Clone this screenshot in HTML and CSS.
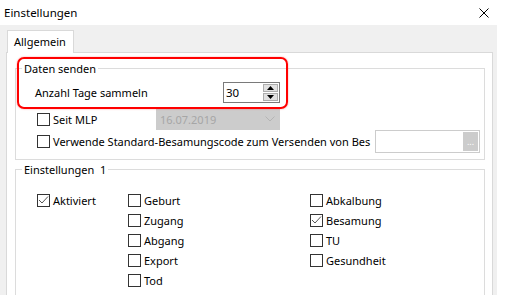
FILE: index.html
```html
<!DOCTYPE html>
<html lang="de">
<head>
  <meta charset="UTF-8">
  <title>Einstellungen</title>
  <link rel="stylesheet" href="styles.css">
</head>
<body>

  <div class="window">
    <!-- Titelleiste -->
    <div class="titlebar">
      <span class="title">Einstellungen</span>
      <svg class="close" width="10" height="10" viewBox="0 0 10 10"><path d="M0.5 0.5 L9.5 9.5 M9.5 0.5 L0.5 9.5" stroke="#000" stroke-width="1"/></svg>
    </div>

    <div class="client">
      <div class="tabs"><div class="tab">Allgemein</div></div>

      <div class="panel">
        <!-- Daten senden -->
        <fieldset class="group g1">
          <legend>Daten senden</legend>
          <div class="row r1">
            <span class="lbl">Anzahl Tage sammeln</span>
            <div class="spin">
              <span class="val">30</span>
              <div class="spin-btns">
                <span class="sbtn"><svg width="7" height="4" viewBox="0 0 7 4"><path d="M3.5 0 L7 4 L0 4Z" fill="#000"/></svg></span>
                <span class="sbtn"><svg width="7" height="4" viewBox="0 0 7 4"><path d="M0 0 L7 0 L3.5 4Z" fill="#000"/></svg></span>
              </div>
            </div>
          </div>
          <div class="row r2">
            <label class="cb w-mlp"><span class="box"></span>Seit MLP</label>
            <div class="date">
              <span>16.07.2019</span>
              <svg width="10" height="6" viewBox="0 0 10 6"><path d="M0.5 0.5 L5 5 L9.5 0.5" stroke="#b4b4b4" fill="none"/></svg>
            </div>
          </div>
          <div class="row r3">
            <label class="cb w-code"><span class="box"></span>Verwende Standard-Besamungscode zum Versenden von Bes</label>
            <div class="txt"><span class="dots">...</span></div>
          </div>
        </fieldset>

        <!-- Einstellungen 1 -->
        <fieldset class="group g2">
          <legend>Einstellungen&nbsp; 1</legend>
          <div class="cols">
            <div class="col c1">
              <label class="cb"><span class="box"><svg width="11" height="11" viewBox="0 0 11 11"><polyline points="1,5 4,8 10,1.5" stroke="#555" fill="none"/></svg></span>Aktiviert</label>
            </div>
            <div class="col c2">
              <label class="cb"><span class="box"></span>Geburt</label>
              <label class="cb"><span class="box"></span>Zugang</label>
              <label class="cb"><span class="box"></span>Abgang</label>
              <label class="cb"><span class="box"></span>Export</label>
              <label class="cb"><span class="box"></span>Tod</label>
            </div>
            <div class="col c3">
              <label class="cb"><span class="box"></span>Abkalbung</label>
              <label class="cb"><span class="box"><svg width="11" height="11" viewBox="0 0 11 11"><polyline points="1,5 4,8 10,1.5" stroke="#555" fill="none"/></svg></span>Besamung</label>
              <label class="cb"><span class="box"></span>TU</label>
              <label class="cb"><span class="box"></span>Gesundheit</label>
            </div>
          </div>
        </fieldset>
      </div>
    </div>

    <!-- Markierung -->
    <div class="highlight"></div>
  </div>

</body>
</html>
```

FILE: styles.css
```css
body {
  margin: 0;
  background: #fff;
  font-family: "Noto Sans", sans-serif;
  font-size: 11px;
  color: #000;
}
.window {
  position: relative;
  width: 497px;
}
.titlebar {
  height: 25px;
  display: flex;
  align-items: center;
  justify-content: space-between;
  padding: 0 8px 0 4px;
}
.title {
  font-size: 11.5px;
  line-height: 16px;
}
.client {
  background: #f0f0f0;
  height: 270px;
  overflow: hidden;
  padding: 5px 0 0 6px;
  box-sizing: border-box;
}
.tabs {
  display: flex;
  padding-left: 1px;
}
.tab {
  position: relative;
  z-index: 1;
  height: 22px;
  line-height: 21px;
  padding: 0 7px 0 6px;
  background: #fff;
  border: 1px solid #d9d9d9;
  border-bottom: none;
  margin-bottom: -1px;
}
.panel {
  width: 487px;
  height: 260px;
  box-sizing: border-box;
  background: #fff;
  border: 1px solid #d9d9d9;
  padding: 7px 0 0 8px;
}
.group {
  width: 470px;
  box-sizing: border-box;
  margin: 0;
  border: 1px solid #dcdcdc;
  padding: 0;
}
.group legend {
  padding: 0 2px;
  margin-left: 6px;
  line-height: 17px;
}
.g1 {
  padding: 5px 0 6px 0;
}
.g2 {
  margin-top: 1px;
  height: 140px;
  padding-top: 16px;
}
.row {
  display: flex;
  align-items: center;
}
.r1 { height: 21px; padding-left: 19px; }
.r2 { height: 22px; margin-top: 5px; padding-left: 21px; }
.r3 { height: 23px; padding-left: 21px; }
.lbl {
  width: 188px;
}
.spin {
  width: 57px;
  height: 21px;
  box-sizing: border-box;
  border: 1px solid #7a7a7a;
  display: flex;
  align-items: center;
  justify-content: space-between;
  padding: 0 1px 0 2px;
  font-size: 11.5px;
}
.spin-btns {
  display: flex;
  flex-direction: column;
  gap: 1px;
}
.sbtn {
  width: 15px;
  height: 8px;
  box-sizing: border-box;
  background: #e1e1e1;
  border: 1px solid #adadad;
  display: flex;
  align-items: center;
  justify-content: center;
}
.cb {
  display: flex;
  align-items: center;
  gap: 3px;
  height: 13px;
  white-space: nowrap;
}
.box {
  width: 13px;
  height: 13px;
  box-sizing: border-box;
  border: 1px solid #333;
  background: #fff;
  flex: none;
  display: flex;
  align-items: center;
  justify-content: center;
}
.w-mlp { width: 119px; }
.w-code { width: 338px; }
.date {
  width: 124px;
  height: 22px;
  box-sizing: border-box;
  background: #cccccc;
  color: #a6a6a6;
  display: flex;
  align-items: center;
  justify-content: space-between;
  padding: 0 5px 0 4px;
}
.txt {
  width: 105px;
  height: 23px;
  box-sizing: border-box;
  border: 1px solid #cccccc;
  display: flex;
  justify-content: flex-end;
  padding: 1px;
}
.dots {
  width: 15px;
  background: #cccccc;
  color: #fff;
  font-size: 9px;
  text-align: center;
  line-height: 19px;
}
.cols {
  display: flex;
  padding-left: 21px;
}
.col {
  display: flex;
  flex-direction: column;
  gap: 7px;
}
.c1 { width: 91px; }
.c2 { width: 182px; }
.highlight {
  position: absolute;
  left: 17px;
  top: 57px;
  width: 271px;
  height: 52px;
  box-sizing: border-box;
  border: 2px solid #f00;
  border-radius: 7px;
  box-shadow: 0 0 2px rgba(255, 0, 0, 0.4);
}
```
